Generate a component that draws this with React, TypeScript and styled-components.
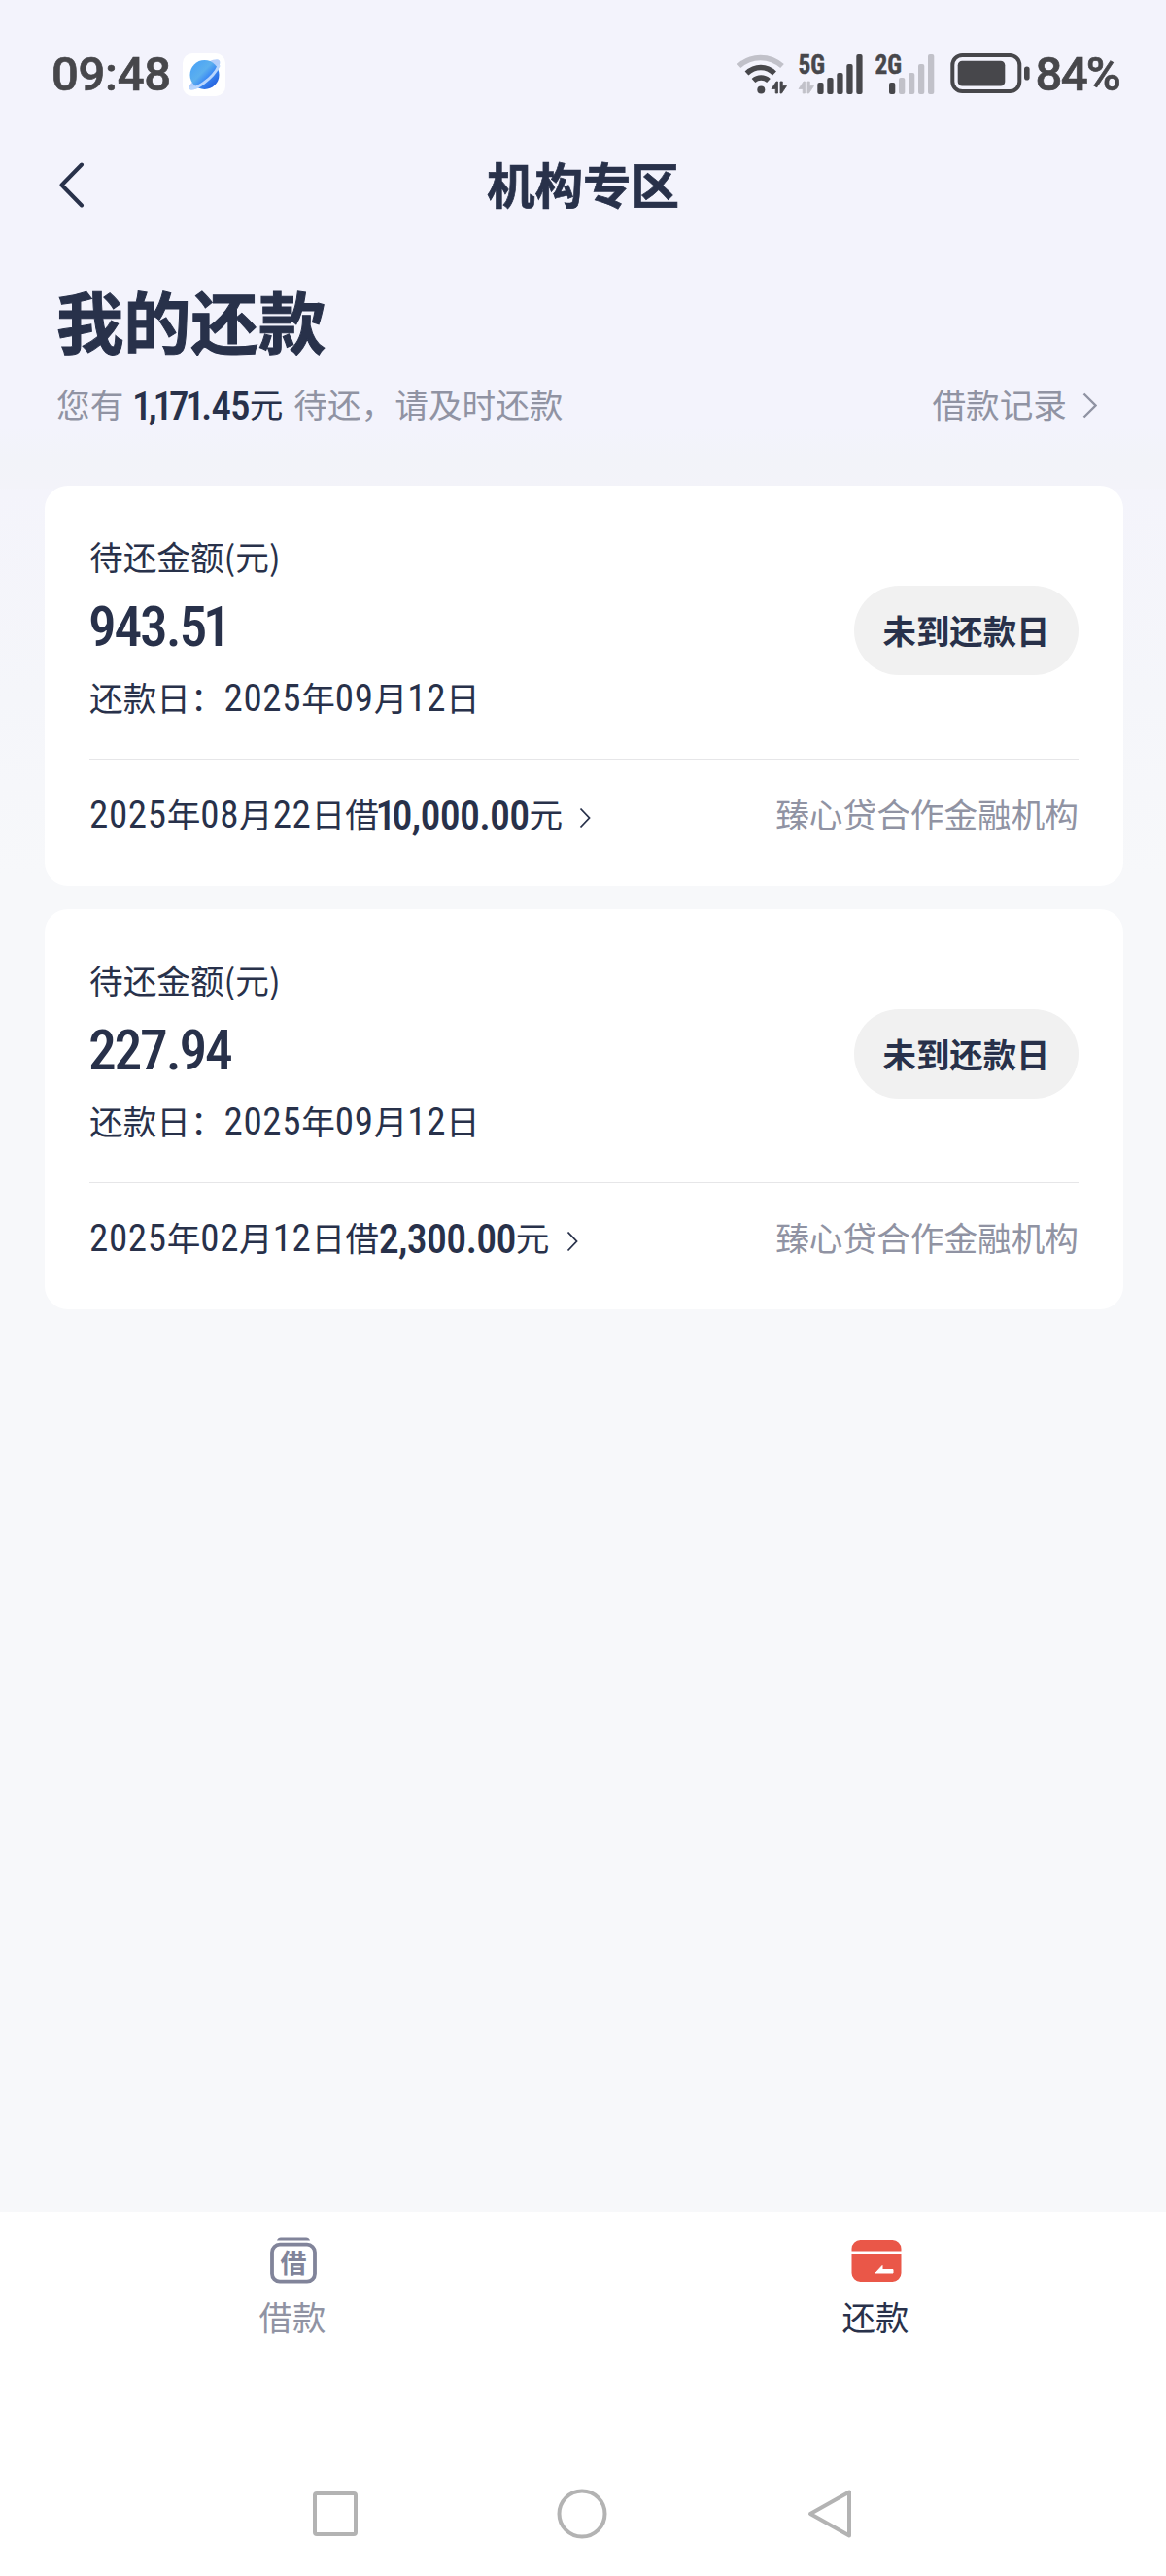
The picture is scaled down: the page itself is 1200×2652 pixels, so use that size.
import React from "react";
import styled, { createGlobalStyle, css } from "styled-components";

const ink = "#28314a";
const muted = "#9093a3";
const status = "#47474b";
const faint = "#c1c1c9";

const GlobalStyle = createGlobalStyle`
  * { box-sizing: border-box; }
  html, body { margin: 0; padding: 0; }
  body {
    font-family: "Noto Sans CJK SC", sans-serif;
    color: ${ink};
    background: #f7f8fa;
  }
`;

const Screen = styled.div`
  width: 1200px;
  height: 2652px;
  display: flex;
  flex-direction: column;
  background: linear-gradient(
    180deg,
    #f3f3fc 0,
    #f3f3fc 440px,
    #f2f3f9 470px,
    #f3f3f9 503px,
    #f4f4fb 504px,
    #f5f6fa 720px,
    #f7f8fa 900px,
    #f7f8fa 100%
  );
`;

const StatusBar = styled.header`
  height: 154px;
  padding: 0 48px 0 53px;
  display: flex;
  align-items: center;
  justify-content: space-between;
  color: ${status};
`;

const StatusGroup = styled.div`
  display: flex;
  align-items: center;
`;

const StatusText = styled.span<{ $tight?: boolean }>`
  font-family: Roboto, sans-serif;
  font-size: 49px;
  font-weight: 500;
  line-height: 56px;
  letter-spacing: ${(p) => (p.$tight ? "-1.8px" : "-0.3px")};
  -webkit-text-stroke: 0.7px ${status};
`;

const AppBadge = styled.div`
  width: 44px;
  height: 44px;
  margin-left: 12px;
  border-radius: 10px;
  background: #fff;
`;

const Indicators = styled.svg`
  display: block;
  margin-right: 4px;
  overflow: visible;
`;

const TitleBar = styled.div`
  height: 72px;
  padding: 0 60px;
  display: grid;
  grid-template-columns: 1fr auto 1fr;
  align-items: center;
`;

const BackButton = styled.button`
  width: 28px;
  height: 48px;
  padding: 0;
  border: 0;
  background: none;
  display: block;
`;

const PageTitle = styled.h1`
  margin: 0;
  padding-bottom: 3px;
  font-size: 49.5px;
  line-height: 66px;
  font-weight: 700;
  -webkit-text-stroke: 0.7px ${ink};
`;

const Intro = styled.section`
  height: 274px;
  padding: 57px 71px 0 58px;
`;

const Heading = styled.h2`
  margin: 0;
  font-size: 69.3px;
  line-height: 92px;
  font-weight: 700;
  -webkit-text-stroke: 1px ${ink};
`;

const IntroRow = styled.div`
  margin-top: 14px;
  display: flex;
  align-items: center;
  justify-content: space-between;
`;

const Line = styled.div<{ $muted?: boolean }>`
  display: flex;
  align-items: baseline;
  height: 52px;
  font-size: 34.65px;
  line-height: 52px;
  white-space: pre;
  ${(p) =>
    p.$muted &&
    css`
      color: ${muted};
    `}
`;

const Strong = styled.span<{ $tight?: boolean }>`
  display: inline-block;
  color: ${ink};
  font-family: "Roboto Condensed", sans-serif;
  font-size: ${(p) => (p.$tight ? "41px" : "42px")};
  font-weight: 500;
  line-height: 1;
  letter-spacing: ${(p) => (p.$tight ? "-0.9px" : "-0.75px")};
  transform: translateY(2px);
`;

const NarrowOne = styled.span`
  margin: 0 -0.075em 0 -0.08em;
`;

const Unit = styled.span`
  color: ${ink};
`;

const IntroAmount = styled.span`
  display: flex;
  align-items: baseline;
  margin: 0 11px 0 12px;
`;

const Digits = styled.span`
  font-family: "Roboto Condensed", sans-serif;
  font-size: 39px;
  font-weight: 400;
  line-height: 1;
  letter-spacing: 0.65px;
`;

const RecordLink = styled.a`
  display: flex;
  align-items: center;
  gap: 16px;
`;

const CardList = styled.main`
  flex: 1;
  padding: 0 44px 0 46px;
  display: flex;
  flex-direction: column;
  gap: 24px;
`;

const Card = styled.article`
  height: 412px;
  padding: 46px 46px 0;
  border-radius: 24px;
  background: #fff;
`;

const CardTop = styled.div`
  height: 236px;
  display: flex;
  align-items: flex-start;
  justify-content: space-between;
  border-bottom: 1px solid #e6e6e8;
`;

const Amount = styled.div`
  height: 76px;
  margin: 10px 0 7px -1px;
  font-family: "Roboto Condensed", sans-serif;
  font-size: 57.5px;
  font-weight: 500;
  line-height: 76px;
  letter-spacing: -2.2px;

  ${NarrowOne} {
    margin-left: -0.035em;
  }
`;

const StatusPill = styled.button`
  width: 231px;
  height: 92px;
  margin-top: 57px;
  padding: 0 0 3px;
  border: 0;
  border-radius: 46px;
  background: #f1f1f1;
  color: ${ink};
  font-family: inherit;
  font-size: 34.4px;
  font-weight: 700;
  line-height: 50px;
`;

const CardBottom = styled.div`
  padding-top: 29px;
  display: flex;
  align-items: center;
  justify-content: space-between;
`;

const LoanLink = styled.a`
  display: flex;
  align-items: center;
  gap: 17px;
`;

const LoanChevron = styled.svg`
  display: block;
  margin-top: 10px;
`;

const LinkChevron = styled.svg`
  display: block;
  margin-top: 4px;
`;

const TabBar = styled.nav`
  height: 255px;
  padding-top: 22px;
  display: grid;
  grid-template-columns: 1fr 1fr;
  background: #fff;
`;

const Tab = styled.a<{ $active?: boolean }>`
  display: flex;
  flex-direction: column;
  align-items: center;
  font-size: 34.4px;
  line-height: 52px;
  padding-left: 2px;
  color: ${(p) => (p.$active ? ink : muted)};
`;

const TabIcon = styled.div`
  height: 59px;
  margin-left: 2px;
`;

const SystemNav = styled.footer`
  height: 120px;
  padding: 25px 319px 0 317px;
  display: flex;
  justify-content: space-between;
  background: #fff;
`;

function MixedText({ text }: { text: string }) {
  return (
    <>
      {text.split(/(\d+)/).map((part, i) =>
        /^\d+$/.test(part) ? <Digits key={i}>{part}</Digits> : <span key={i}>{part}</span>
      )}
    </>
  );
}

function Figure({ value }: { value: string }) {
  return (
    <>
      {value.split(/(1)/).map((part, i) =>
        part === "1" ? <NarrowOne key={i}>1</NarrowOne> : part
      )}
    </>
  );
}

function BrowserIcon() {
  return (
    <svg width="44" height="44" viewBox="0 0 44 44" fill="none">
      <defs>
        <linearGradient id="globe" x1="0.15" y1="0.2" x2="0.85" y2="0.9">
          <stop offset="0" stopColor="#4fa6f4" />
          <stop offset="0.35" stopColor="#5cb0ee" />
          <stop offset="0.6" stopColor="#3c8bf4" />
          <stop offset="1" stopColor="#2560dc" />
        </linearGradient>
      </defs>
      <path d="M27 8.500C34 5 40 5 38 11.500C36 18 29 26 21 32C13 38.500 4 40 7 33Z" fill="#b3cefb" />
      <circle cx="22.500" cy="22" r="15" fill="url(#globe)" />
      <path d="M37 13C34.500 18.500 28.500 25.500 21.500 30.500C16 34.500 11.500 36.300 8.500 35.800" stroke="#b9d6fd" strokeWidth="3" strokeLinecap="round" />
    </svg>
  );
}

const barTops = [30, 25, 20, 11, 1];

function DataArrows({ x, color }: { x: number; color: string }) {
  return (
    <path
      transform={`translate(${x} 29)`}
      d="M6.500 0V12H4.200V7.500H0L5 0ZM9 0H11.300V4.500H15.500L10.500 12H9Z"
      fill={color}
      stroke={color}
      strokeWidth="0.8"
      strokeLinejoin="round"
    />
  );
}

function NetworkLabel({ x, label }: { x: number; label: string }) {
  return (
    <text
      x={x}
      y="21"
      fontFamily="Roboto Condensed, sans-serif"
      fontWeight="700"
      fontSize="28"
      textLength="27.500"
      lengthAdjust="spacingAndGlyphs"
      fill={status}
      stroke={status}
      strokeWidth="0.5"
    >
      {label}
    </text>
  );
}

function StatusIndicators() {
  return (
    <Indicators width="304" height="44" viewBox="0 0 304 44" fill="none">
      <path d="M2.500 13C15 1.500 34 1.500 47 13" stroke={faint} strokeWidth="5.500" />
      <path d="M10.500 20.500C19 12.500 31 12.500 39 20.500" stroke={status} strokeWidth="5.500" />
      <path d="M17.500 28C22 24 28.500 24 33 28" stroke={status} strokeWidth="5.500" />
      <circle cx="25.300" cy="37.500" r="4" fill={status} />
      <DataArrows x={36} color={status} />
      <NetworkLabel x={63.5} label="5G" />
      <DataArrows x={64} color={faint} />
      {barTops.map((y, i) => (
        <rect key={y} x={83.3 + i * 10} y={y} width="6.300" height={42 - y} rx="2" fill={status} />
      ))}
      <NetworkLabel x={142.5} label="2G" />
      {barTops.map((y, i) => (
        <rect key={y} x={157 + i * 10} y={y} width="6.300" height={42 - y} rx="2" fill={i === 0 ? status : faint} />
      ))}
      <rect x="222.300" y="2" width="69" height="37" rx="10" stroke={status} strokeWidth="4" />
      <rect x="227.700" y="7.700" width="48.600" height="25.800" rx="4.500" fill={status} />
      <rect x="296" y="13.500" width="5.600" height="14" rx="2.800" fill={status} />
    </Indicators>
  );
}

function Chevron({ w, h, color, stroke }: { w: number; h: number; color: string; stroke: number }) {
  return <path d={`M1.500 1.500L${w - 1.5} ${h / 2}L1.500 ${h - 1.5}`} stroke={color} strokeWidth={stroke} />;
}

interface Loan {
  due: string;
  dueDate: string;
  borrowed: string;
  principal: string;
}

const loans: Loan[] = [
  { due: "943.51", dueDate: "2025年09月12日", borrowed: "2025年08月22日借", principal: "10,000.00" },
  { due: "227.94", dueDate: "2025年09月12日", borrowed: "2025年02月12日借", principal: "2,300.00" },
];

function LoanCard({ loan }: { loan: Loan }) {
  return (
    <Card>
      <CardTop>
        <div>
          <Line>待还金额(元)</Line>
          <Amount>
            <Figure value={loan.due} />
          </Amount>
          <Line>
            <MixedText text={`还款日：${loan.dueDate}`} />
          </Line>
        </div>
        <StatusPill>未到还款日</StatusPill>
      </CardTop>
      <CardBottom>
        <LoanLink>
          <Line>
            <MixedText text={loan.borrowed} />
            <Strong>
              <Figure value={loan.principal} />
            </Strong>
            <Unit>元</Unit>
          </Line>
          <LoanChevron width="12" height="22" viewBox="0 0 12 22" fill="none">
            <Chevron w={12} h={22} color={ink} stroke={1.8} />
          </LoanChevron>
        </LoanLink>
        <Line $muted>臻心贷合作金融机构</Line>
      </CardBottom>
    </Card>
  );
}

export default function App() {
  return (
    <Screen>
      <GlobalStyle />
      <StatusBar>
        <StatusGroup>
          <StatusText>09:48</StatusText>
          <AppBadge>
            <BrowserIcon />
          </AppBadge>
        </StatusGroup>
        <StatusGroup>
          <StatusIndicators />
          <StatusText $tight>84%</StatusText>
        </StatusGroup>
      </StatusBar>

      <TitleBar>
        <BackButton aria-label="返回">
          <svg width="28" height="48" viewBox="0 0 28 48" fill="none">
            <path d="M24 3.500L3.500 24.500L24 45.500" stroke={ink} strokeWidth="4" strokeLinecap="round" strokeLinejoin="round" />
          </svg>
        </BackButton>
        <PageTitle>机构专区</PageTitle>
      </TitleBar>

      <Intro>
        <Heading>我的还款</Heading>
        <IntroRow>
          <Line $muted>
            <span>您有</span>
            <IntroAmount>
              <Strong $tight>
                <Figure value="1,171.45" />
              </Strong>
              <Unit>元</Unit>
            </IntroAmount>
            <span>待还，请及时还款</span>
          </Line>
          <RecordLink>
            <Line $muted>借款记录</Line>
            <LinkChevron width="15" height="27" viewBox="0 0 15 27" fill="none">
              <Chevron w={15} h={27} color={muted} stroke={2.4} />
            </LinkChevron>
          </RecordLink>
        </IntroRow>
      </Intro>

      <CardList>
        {loans.map((loan) => (
          <LoanCard key={loan.borrowed} loan={loan} />
        ))}
      </CardList>

      <TabBar>
        <Tab>
          <TabIcon>
            <svg width="50" height="54" viewBox="0 0 50 54" fill="none">
              <path d="M8 7.500Q9 4.500 12 4.500H38Q41 4.500 42 7.500Z" fill="#81849a" />
              <rect x="3" y="11.700" width="44" height="38" rx="8" stroke="#81849a" strokeWidth="3.800" />
              <text x="25" y="40.500" textAnchor="middle" fontFamily="Noto Sans CJK SC, sans-serif" fontWeight="700" fontSize="27" fill="#81849a">借</text>
            </svg>
          </TabIcon>
          借款
        </Tab>
        <Tab $active>
          <TabIcon>
            <svg width="52" height="54" viewBox="0 0 52 54" fill="none">
              <path d="M.500 18.500V16A9 9 0 0 1 9.500 7H42.500A9 9 0 0 1 51.500 16V18.500Z" fill="#ea5748" />
              <path d="M.500 22H51.500V41A9 9 0 0 1 42.500 50H9.500A9 9 0 0 1 .500 41Z" fill="#ea5748" />
              <path d="M25 41L32 33.500V37.500H43V41Z" fill="#fff" stroke="#fff" strokeWidth="1" strokeLinejoin="round" />
            </svg>
          </TabIcon>
          还款
        </Tab>
      </TabBar>

      <SystemNav>
        <svg width="56" height="62" viewBox="0 0 56 62" fill="none">
          <rect x="7" y="10" width="42" height="42" rx="2" stroke="#b3b3b3" strokeWidth="4" />
        </svg>
        <svg width="56" height="62" viewBox="0 0 56 62" fill="none">
          <circle cx="28" cy="31" r="23.500" stroke="#b3b3b3" strokeWidth="4" />
        </svg>
        <svg width="56" height="62" viewBox="0 0 56 62" fill="none">
          <path d="M49 8.500V53.500L9 31Z" stroke="#b3b3b3" strokeWidth="4" strokeLinejoin="round" />
        </svg>
      </SystemNav>
    </Screen>
  );
}
